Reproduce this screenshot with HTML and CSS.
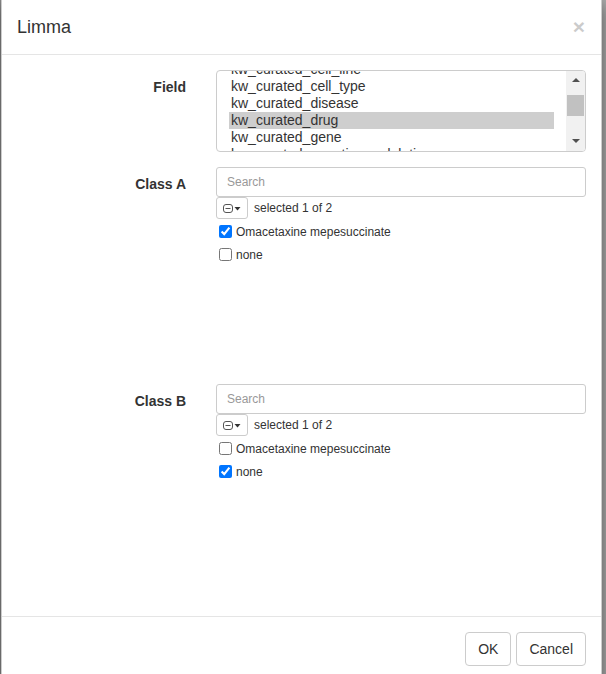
FILE: index.html
```html
<!DOCTYPE html>
<html lang="en">
<head>
    <meta charset="UTF-8">
    <meta name="viewport" content="width=device-width, initial-scale=1.0">
    <title>Limma</title>
    <link rel="stylesheet" href="styles.css">
</head>
<body>
    <div class="backdrop">
        <div class="modal">
            <div class="modal-header">
                <h4 class="modal-title">Limma</h4>
                <button class="close" type="button">&times;</button>
            </div>

            <div class="modal-body">
                <div class="form-row">
                    <label class="field-label">Field</label>
                    <div class="control">
                        <div class="listbox">
                            <div class="list-items">
                                <div class="option">kw_curated_cell_line</div>
                                <div class="option">kw_curated_cell_type</div>
                                <div class="option">kw_curated_disease</div>
                                <div class="option selected">kw_curated_drug</div>
                                <div class="option">kw_curated_gene</div>
                                <div class="option">kw_curated_genetic_modulation</div>
                            </div>
                            <div class="scrollbar">
                                <span class="arrow up"></span>
                                <span class="thumb"></span>
                                <span class="arrow down"></span>
                            </div>
                        </div>
                    </div>
                </div>

                <div class="form-row class-group">
                    <label class="field-label">Class A</label>
                    <div class="control">
                        <input class="search" type="text" placeholder="Search">
                        <div class="select-bar">
                            <button class="toggle-btn" type="button">
                                <svg width="18" height="12" viewBox="0 0 18 12">
                                    <rect x="0.5" y="2.5" width="9" height="8" rx="2.5" fill="none" stroke="#555" stroke-width="1"/>
                                    <line x1="2.5" y1="6.5" x2="7.5" y2="6.5" stroke="#555" stroke-width="1"/>
                                    <path d="M11.5 5 L17.5 5 L14.5 8.5 Z" fill="#333"/>
                                </svg>
                            </button>
                            <span class="count">selected 1 of 2</span>
                        </div>
                        <div class="checks">
                            <label class="check"><input type="checkbox" checked> Omacetaxine mepesuccinate</label>
                            <label class="check"><input type="checkbox"> none</label>
                        </div>
                    </div>
                </div>

                <div class="form-row class-group">
                    <label class="field-label">Class B</label>
                    <div class="control">
                        <input class="search" type="text" placeholder="Search">
                        <div class="select-bar">
                            <button class="toggle-btn" type="button">
                                <svg width="18" height="12" viewBox="0 0 18 12">
                                    <rect x="0.5" y="2.5" width="9" height="8" rx="2.5" fill="none" stroke="#555" stroke-width="1"/>
                                    <line x1="2.5" y1="6.5" x2="7.5" y2="6.5" stroke="#555" stroke-width="1"/>
                                    <path d="M11.5 5 L17.5 5 L14.5 8.5 Z" fill="#333"/>
                                </svg>
                            </button>
                            <span class="count">selected 1 of 2</span>
                        </div>
                        <div class="checks">
                            <label class="check"><input type="checkbox"> Omacetaxine mepesuccinate</label>
                            <label class="check"><input type="checkbox" checked> none</label>
                        </div>
                    </div>
                </div>
            </div>

            <div class="modal-footer">
                <button class="btn" type="button">OK</button>
                <button class="btn" type="button">Cancel</button>
            </div>
        </div>
    </div>
</body>
</html>
```

FILE: styles.css
```css
* {
    margin: 0;
    padding: 0;
    box-sizing: border-box;
    font-family: "Liberation Sans", Arial, sans-serif;
}

body {
    background-color: #a9a9a9;
    color: #333;
    overflow: hidden;
}

.backdrop {
    height: 674px;
    border-left: 1px solid #8a8a8a;
}

.modal {
    width: 601px;
    height: 700px;
    background-color: #fff;
    border: 1px solid rgba(0, 0, 0, 0.2);
    border-top: none;
    box-shadow: 0 5px 15px rgba(0, 0, 0, 0.5);
}

.modal-header {
    display: flex;
    justify-content: space-between;
    align-items: flex-start;
    padding: 15px;
    border-bottom: 1px solid #e5e5e5;
    height: 55px;
}

.modal-title {
    font-size: 18px;
    font-weight: normal;
    line-height: 24px;
    color: #333;
}

.close {
    border: none;
    background: none;
    font-size: 21px;
    font-weight: bold;
    line-height: 1;
    color: #000;
    opacity: 0.2;
    margin-top: 1px;
    margin-right: 1px;
}

.modal-body {
    padding: 15px;
}

.form-row {
    display: grid;
    grid-template-columns: 169px 370px;
    column-gap: 30px;
    margin-bottom: 15px;
}

.class-group {
    height: 202px;
}

.field-label {
    text-align: right;
    font-weight: bold;
    font-size: 14px;
    line-height: 20px;
    padding-top: 7px;
    color: #333;
}

/* list box */
.listbox {
    display: flex;
    height: 82px;
    border: 1px solid #ccc;
    border-radius: 4px;
    overflow: hidden;
}

.list-items {
    flex: 1;
    padding: 0 12px;
    margin-top: -10px;
}

.option {
    font-size: 14px;
    line-height: 17px;
    height: 17px;
    padding-left: 2px;
    color: #333;
    white-space: nowrap;
}

.option.selected {
    background-color: #cecece;
}

.scrollbar {
    width: 19px;
    background-color: #f1f1f1;
    display: flex;
    flex-direction: column;
    align-items: center;
    padding: 5px 0;
}

.arrow {
    width: 0;
    height: 0;
    border-left: 4px solid transparent;
    border-right: 4px solid transparent;
}

.arrow.up {
    border-bottom: 4px solid #505050;
    margin-top: 2px;
}

.arrow.down {
    border-top: 4px solid #505050;
    margin-top: auto;
    margin-bottom: 3px;
}

.thumb {
    width: 17px;
    height: 21px;
    background-color: #c1c1c1;
    margin-top: 13px;
}

/* class selectors */
.search {
    display: block;
    width: 100%;
    height: 30px;
    padding: 5px 10px;
    font-size: 12px;
    border: 1px solid #ccc;
    border-radius: 3px;
    color: #555;
    outline: none;
}

.search::placeholder {
    color: #999;
}

.select-bar {
    display: flex;
    align-items: center;
    height: 22px;
}

.toggle-btn {
    width: 32px;
    height: 22px;
    border: 1px solid #ccc;
    border-radius: 3px;
    background-color: #fff;
    display: flex;
    align-items: center;
    justify-content: center;
}

.count {
    font-size: 12px;
    margin-left: 6px;
    color: #333;
}

.checks {
    padding-top: 1px;
}

.check {
    display: flex;
    align-items: center;
    height: 23px;
    font-size: 12px;
    color: #333;
}

.check input {
    width: 13px;
    height: 13px;
    margin: 0 4px 0 3px;
}

/* footer */
.modal-footer {
    display: flex;
    justify-content: flex-end;
    gap: 5px;
    padding: 15px;
    border-top: 1px solid #e5e5e5;
}

.btn {
    font-size: 14px;
    line-height: 20px;
    padding: 6px 12px;
    background-color: #fff;
    border: 1px solid #ccc;
    border-radius: 4px;
    color: #333;
}
```
